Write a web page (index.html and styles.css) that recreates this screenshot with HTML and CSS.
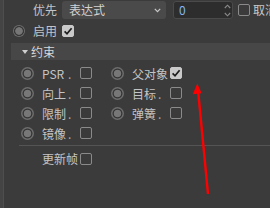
FILE: index.html
```html
<!DOCTYPE html>
<html lang="zh">
<head>
<meta charset="utf-8">
<link rel="stylesheet" href="styles.css">
</head>
<body>
<div class="app">
  <div class="side"></div>
  <div class="main">
    <div class="row r1">
      <div class="lbl">优先</div>
      <div class="dropdown"><span>表达式</span>
        <svg class="chev" width="7" height="5" viewBox="0 0 7 5"><polyline points="0.8,0.8 3.5,3.6 6.2,0.8" fill="none" stroke="#c8c8c8" stroke-width="1.2"/></svg>
      </div>
      <div class="num"><span class="val">0</span>
        <svg class="spin" width="7" height="13" viewBox="0 0 7 13"><polyline points="0.8,4 3.5,1.2 6.2,4" fill="none" stroke="#8a8a8a" stroke-width="1.1"/><polyline points="0.8,9 3.5,11.8 6.2,9" fill="none" stroke="#8a8a8a" stroke-width="1.1"/></svg>
      </div>
      <span class="cb top"></span>
      <span class="txt">取消</span>
    </div>
    <div class="row r2">
      <div class="lbl rl"><span class="radio"></span><span>启用</span></div>
      <span class="cb on"><svg width="12" height="12" viewBox="0 0 12 12"><polyline points="2.6,6.4 5,8.8 9.6,3.2" fill="none" stroke="#1c1c1c" stroke-width="1.7"/></svg></span>
    </div>
    <div class="header"><span class="tri"></span><span>约束</span></div>
    <div class="grid">
      <div class="cell"><span class="radio"></span><span class="clbl"><span class="t">PSR</span><span class="dot">.</span></span><span class="cb"></span></div>
      <div class="cell"><span class="radio"></span><span class="clbl"><span class="t">父对象</span></span><span class="cb on"><svg width="12" height="12" viewBox="0 0 12 12"><polyline points="2.6,6.4 5,8.8 9.6,3.2" fill="none" stroke="#1c1c1c" stroke-width="1.7"/></svg></span></div>
      <div class="cell"><span class="radio"></span><span class="clbl"><span class="t">向上</span><span class="dot">.</span></span><span class="cb"></span></div>
      <div class="cell"><span class="radio"></span><span class="clbl"><span class="t">目标</span><span class="dot">.</span></span><span class="cb"></span></div>
      <div class="cell"><span class="radio"></span><span class="clbl"><span class="t">限制</span><span class="dot">.</span></span><span class="cb"></span></div>
      <div class="cell"><span class="radio"></span><span class="clbl"><span class="t">弹簧</span><span class="dot">.</span></span><span class="cb"></span></div>
      <div class="cell"><span class="radio"></span><span class="clbl"><span class="t">镜像</span><span class="dot">.</span></span><span class="cb"></span></div>
    </div>
    <div class="sep"></div>
    <div class="row r3"><span class="lbl3">更新帧</span><span class="cb"></span></div>
  </div>
  <svg class="arrow" width="270" height="208" viewBox="0 0 270 208">
    <line x1="198.1" y1="91" x2="208" y2="194" stroke="#ff0000" stroke-width="2.4"/>
    <polygon points="197.3,83.5 192.8,94.2 201.6,93.2" fill="#ff0000"/>
  </svg>
</div>
</body>
</html>
```

FILE: styles.css
```css
html, body {
  margin: 0;
  padding: 0;
}
body {
  width: 270px;
  height: 208px;
  overflow: hidden;
  background: #3b3b3b;
  font-family: "Noto Sans CJK SC", "Noto Sans", sans-serif;
  font-size: 12px;
  color: #c4c4c4;
}
.app {
  position: relative;
  display: flex;
  width: 270px;
  height: 208px;
  overflow: hidden;
}
.side {
  width: 3px;
  flex: none;
  background: #444444;
  border-right: 1px solid #4e4e4e;
}
.main {
  flex: 1;
  min-width: 0;
  display: flex;
  flex-direction: column;
}
.row {
  display: flex;
  align-items: center;
  height: 18px;
  line-height: 18px;
  white-space: nowrap;
}
.r1 { margin-top: 1px; }
.r2 { margin-top: 3px; }
.lbl {
  width: 53px;
  flex: none;
  text-align: right;
}
.rl {
  display: flex;
  align-items: center;
  justify-content: space-between;
  box-sizing: border-box;
  padding-left: 9px;
}
.rl .radio { width: 12px; height: 12px; }
.dropdown {
  margin-left: 5px;
  width: 104px;
  height: 18px;
  flex: none;
  box-sizing: border-box;
  padding: 0 5px 0 7px;
  background: #4a4a4a;
  border-radius: 3px;
  display: flex;
  align-items: center;
  justify-content: space-between;
  color: #d2d2d2;
}
.num {
  margin-left: 7px;
  width: 60px;
  height: 18px;
  flex: none;
  box-sizing: border-box;
  padding: 0 1px 0 5px;
  background: #2d2d2d;
  border: 1px solid #4a4a4a;
  border-radius: 3px;
  display: flex;
  align-items: center;
  justify-content: space-between;
}
.val { color: #86b6ee; }
.cb {
  width: 12px;
  height: 12px;
  flex: none;
  box-sizing: border-box;
  border: 1px solid #8a8a8a;
  border-radius: 2px;
  display: block;
}
.cb svg { display: block; }
.cb.on {
  background: #c9c9c9;
  border-color: #c9c9c9;
}
.cb.on svg { margin: -1px; }
.r1 .cb { margin-left: 5px; }
.r2 .cb { margin-left: 5px; }
.txt { margin-left: 3px; color: #c8c8c8; }
.header {
  margin-top: 3px;
  margin-left: 7px;
  height: 17px;
  line-height: 17px;
  background: #474747;
  display: flex;
  align-items: center;
  padding-left: 11px;
  color: #d6d6d6;
}
.tri {
  width: 0;
  height: 0;
  border-left: 3px solid transparent;
  border-right: 3px solid transparent;
  border-top: 4px solid #cfcfcf;
  margin-right: 3px;
}
.grid {
  margin-top: 3px;
  padding-left: 17px;
  display: grid;
  grid-template-columns: 90px 90px;
  grid-auto-rows: 20px;
}
.cell {
  display: flex;
  align-items: center;
  white-space: nowrap;
}
.radio {
  width: 13px;
  height: 13px;
  flex: none;
  border-radius: 50%;
  background: radial-gradient(circle at 50% 50%, #777777 0 3.4px, #383838 4.1px 4.7px, #6c6c6c 5.3px);
  display: block;
}
.clbl {
  margin-left: 8px;
  width: 38px;
  flex: none;
  display: flex;
  align-items: center;
}
.clbl .t { width: 24px; flex: none; }
.dot { margin-left: 2px; color: #a8a8a8; }
.sep {
  margin-top: 2px;
  margin-left: 15px;
  height: 1px;
  background: #545454;
}
.r3 {
  margin-top: 4px;
  padding-left: 38px;
}
.lbl3 {
  width: 36px;
  margin-right: 2px;
  text-align: right;
}
.arrow {
  position: absolute;
  left: 0;
  top: 0;
  pointer-events: none;
}
```
